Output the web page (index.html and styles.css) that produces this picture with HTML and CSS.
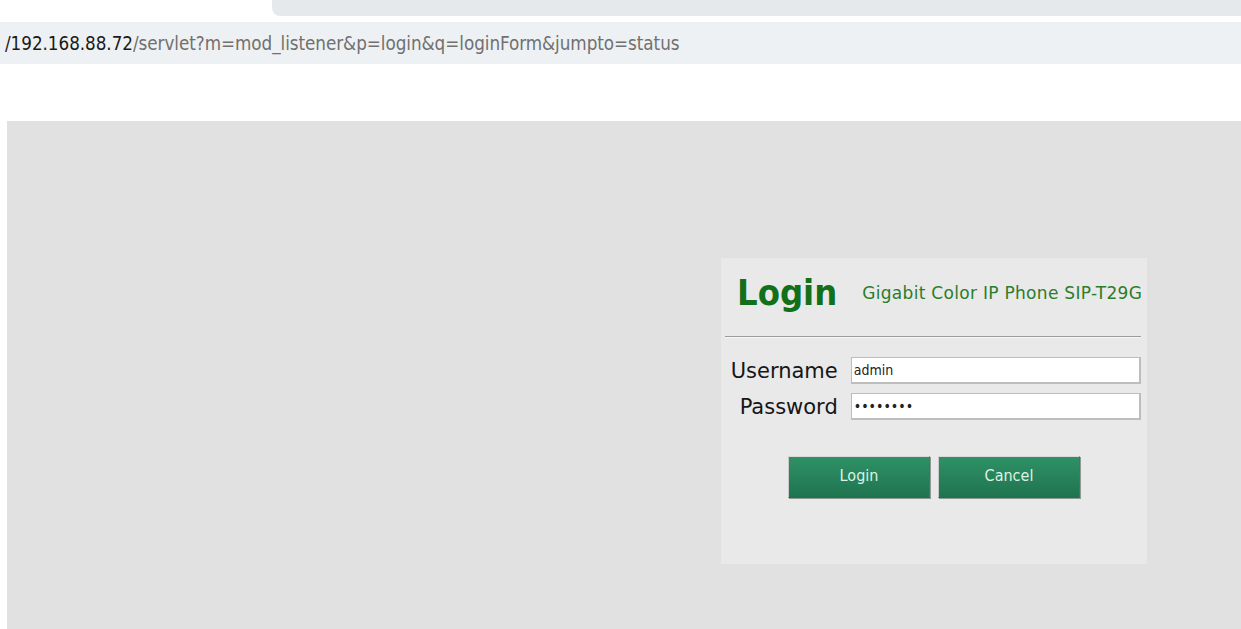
FILE: index.html
```html
<!DOCTYPE html>
<html lang="en">
<head>
<meta charset="utf-8">
<title>Login</title>
<link rel="stylesheet" href="styles.css">
</head>
<body>
  <div class="tabstrip"></div>
  <div class="addressbar">
    <span class="host">/192.168.88.72</span><span class="path">/servlet?m=mod_listener&amp;p=login&amp;q=loginForm&amp;jumpto=status</span>
  </div>
  <div class="gap"></div>
  <main class="page">
    <section class="login-box">
      <header class="login-head">
        <h1 class="login-title">Login</h1>
        <span class="login-model">Gigabit Color IP Phone SIP-T29G</span>
      </header>
      <hr class="login-rule">
      <form class="login-form">
        <div class="field">
          <label class="field-label" for="user">Username</label>
          <input class="field-input" id="user" type="text" value="admin">
        </div>
        <div class="field">
          <label class="field-label" for="pass">Password</label>
          <input class="field-input" id="pass" type="password" value="admin123">
        </div>
        <div class="actions">
          <button class="btn" type="button">Login</button>
          <button class="btn" type="button">Cancel</button>
        </div>
      </form>
    </section>
  </main>
</body>
</html>
```

FILE: styles.css
```css
html, body {
  margin: 0;
  padding: 0;
  background: #ffffff;
  height: 100%;
  overflow: hidden;
}

body {
  font-family: "DejaVu Sans", sans-serif;
}

.tabstrip {
  height: 16px;
  margin-left: 272px;
  background: #e6e9ec;
  border-bottom-left-radius: 8px;
}

.addressbar {
  margin-top: 6px;
  height: 42px;
  background: #eef1f3;
  display: flex;
  align-items: center;
  padding-left: 5px;
  font-family: "DejaVu Sans Condensed", "DejaVu Sans", sans-serif;
  font-stretch: condensed;
  font-size: 18.7px;
  letter-spacing: -0.05px;
  white-space: nowrap;
}

.host {
  color: #1a1a1a;
}

.path {
  color: #707070;
}

.gap {
  height: 57px;
}

.page {
  margin-left: 7px;
  height: 508px;
  background: #e1e1e1;
  padding: 137px 0 0 714px;
  box-sizing: border-box;
}

.login-box {
  width: 426px;
  height: 306px;
  background: #e9e9e9;
  box-sizing: border-box;
  padding: 13px 6px 0 4px;
}

.login-head {
  display: flex;
  align-items: baseline;
  padding-left: 12px;
  height: 57px;
  white-space: nowrap;
}

.login-title {
  margin: 0;
  font-family: "DejaVu Sans Condensed", "DejaVu Sans", sans-serif;
  font-size: 36px;
  font-weight: bold;
  color: #12701a;
  line-height: 44px;
}

.login-model {
  margin-left: 25px;
  position: relative;
  top: -6px;
  font-size: 17px;
  color: #2b7d2b;
  letter-spacing: 0.3px;
  white-space: nowrap;
}

.login-rule {
  margin: 8px 0 0 0;
  border: 0;
  height: 1px;
  background: #9c9c9c;
  box-shadow: 0 1px 0 #f6f6f6;
}

.login-form {
  display: flex;
  flex-direction: column;
  gap: 9px;
  padding-top: 20px;
}

.field {
  display: flex;
  align-items: center;
}

.field-label {
  width: 113px;
  text-align: right;
  font-family: "DejaVu Sans", sans-serif;
  font-size: 21px;
  color: #161616;
}

.field-input {
  margin-left: 13px;
  width: 291px;
  height: 27px;
  box-sizing: border-box;
  border: 2px solid #bdbdbd;
  border-width: 1px 2px 2px 1px;
  background: #ffffff;
  font-family: "DejaVu Sans Condensed", "DejaVu Sans", sans-serif;
  font-size: 14px;
  color: #222222;
  padding: 0 2px;
  outline: none;
}

.actions {
  display: flex;
  justify-content: center;
  gap: 8px;
  padding-top: 27px;
  padding-left: 2px;
}

.btn {
  width: 142px;
  height: 42px;
  background: linear-gradient(#2f9166, #1f7450);
  border: 1px solid;
  border-color: #d9d9d9 #5a6b62 #4b5a52 #c9c9c9;
  box-shadow: 1px 1px 0 #8e9a93;
  color: #dcf3e4;
  font-family: "DejaVu Sans Condensed", "DejaVu Sans", sans-serif;
  font-stretch: condensed;
  font-size: 16px;
  padding: 0 0 4px 0;
  cursor: pointer;
}
```
